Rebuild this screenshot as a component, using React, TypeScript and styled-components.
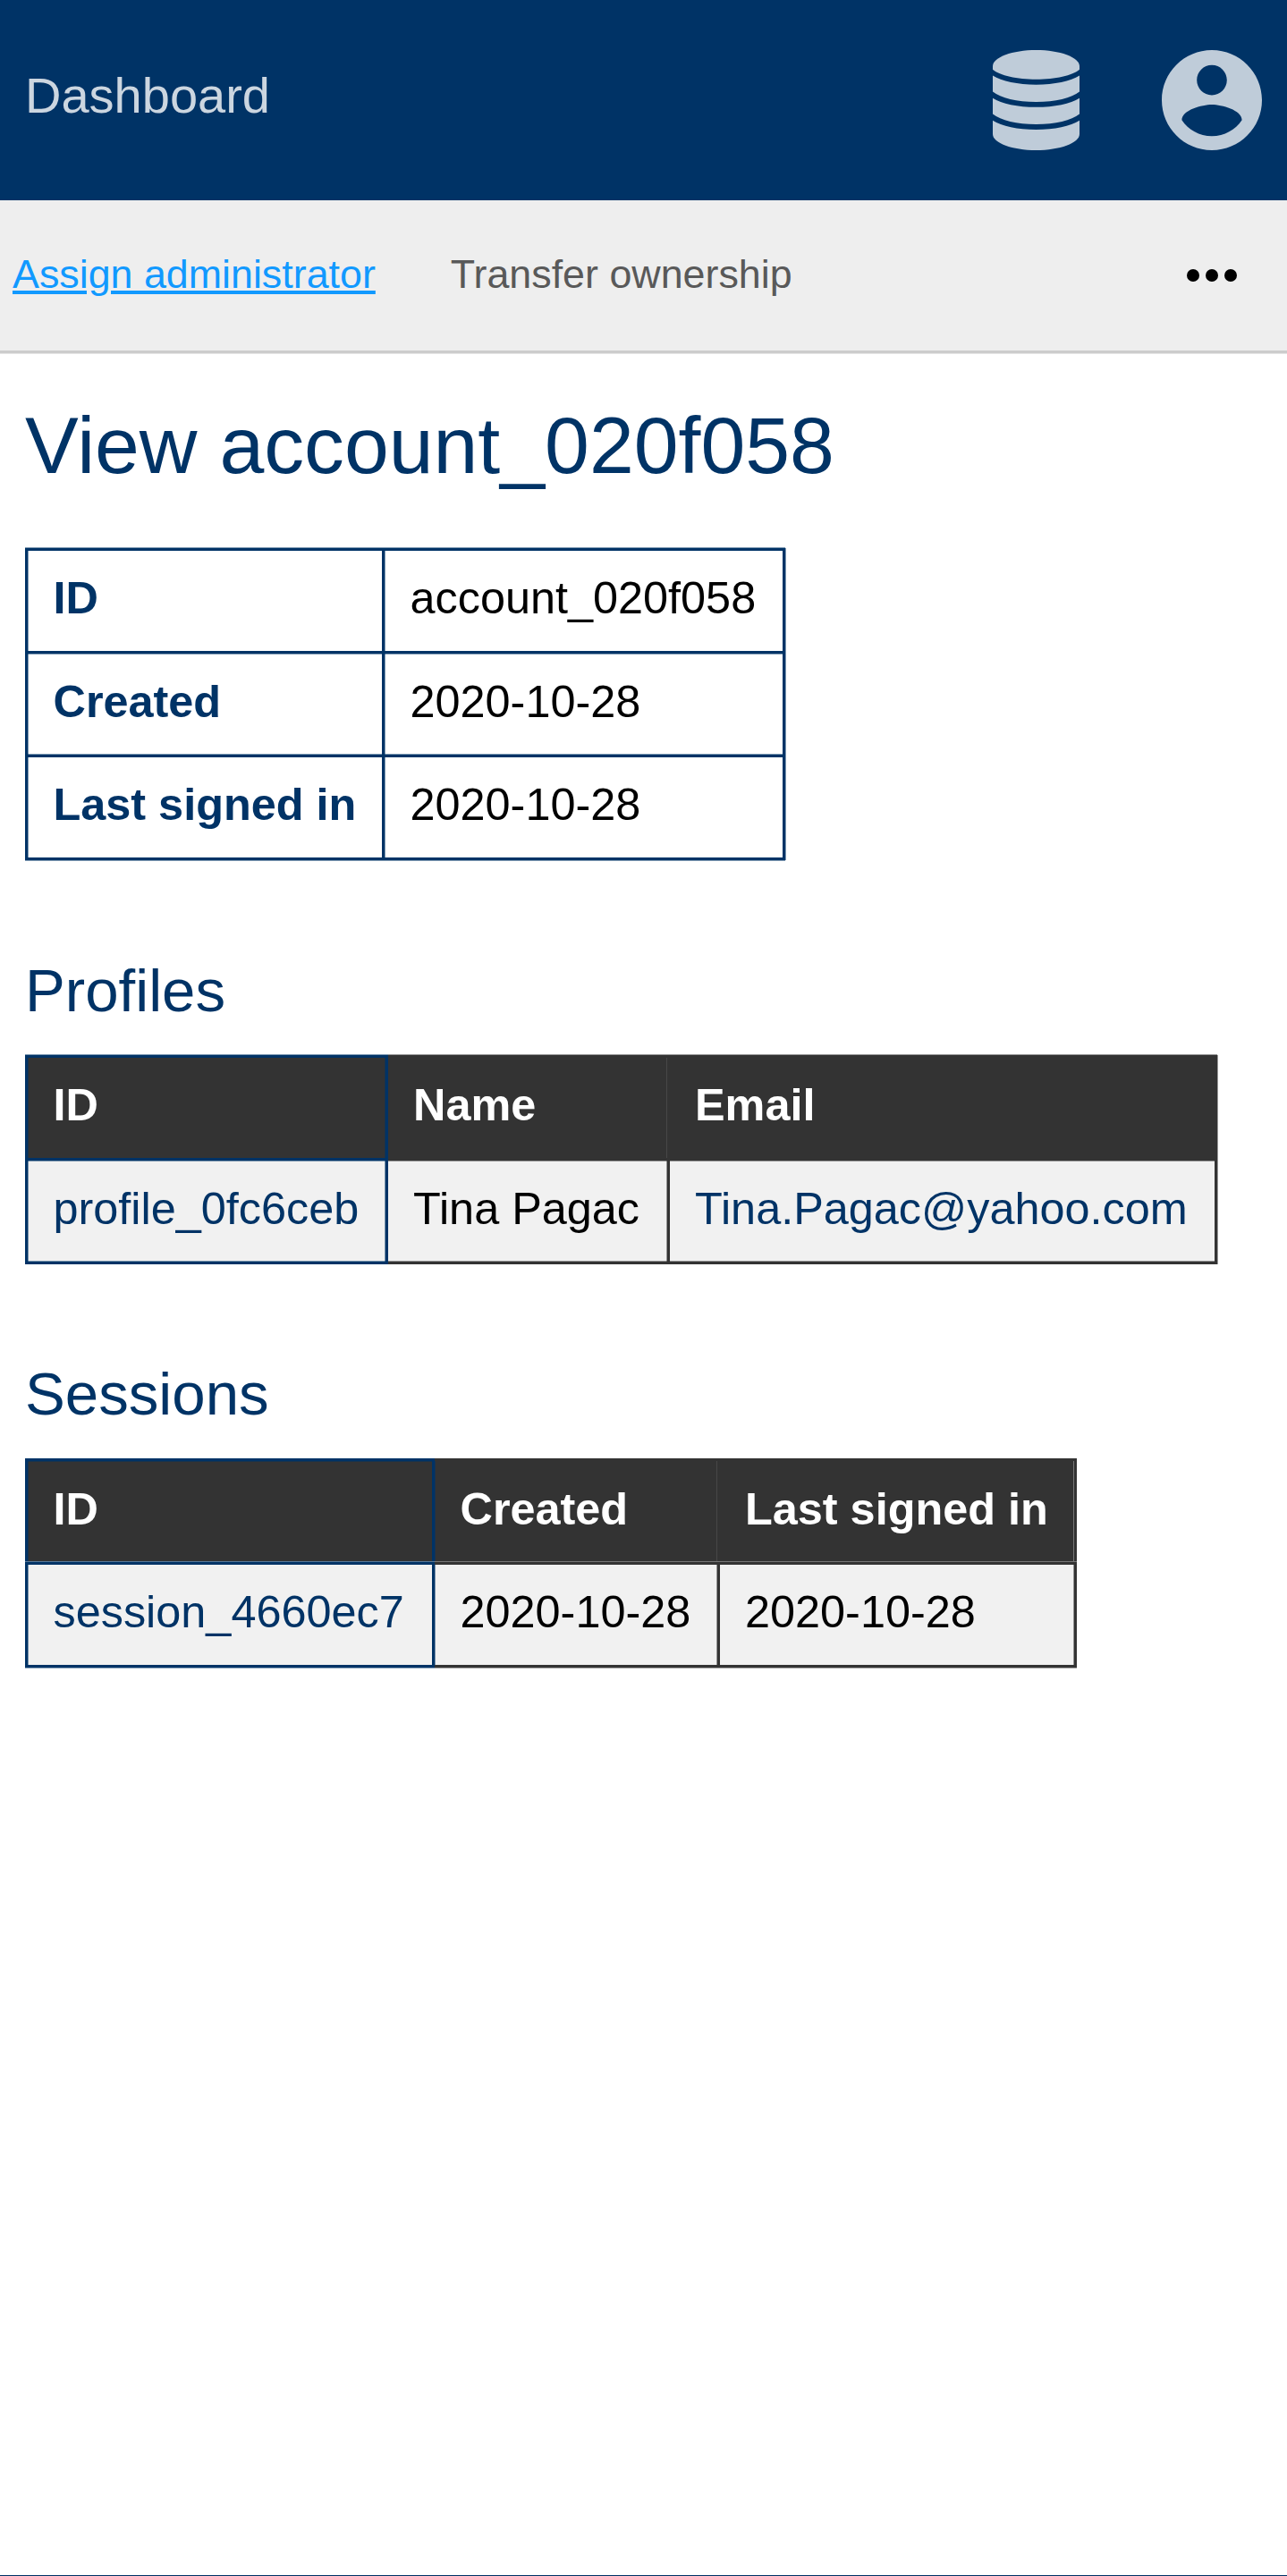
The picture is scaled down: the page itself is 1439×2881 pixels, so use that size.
import React from "react";
import styled, { createGlobalStyle, css } from "styled-components";

const NAVY = "#003366";
const INK = "#333333";

const GlobalStyle = createGlobalStyle`
  * { box-sizing: border-box; }
  body {
    margin: 0;
    background: #ffffff;
    font-family: "Liberation Sans", Arial, sans-serif;
  }
`;

const Page = styled.div`
  display: flex;
  flex-direction: column;
  height: 2881px;
  overflow: hidden;
`;

const Header = styled.header`
  display: flex;
  align-items: center;
  justify-content: space-between;
  height: 224px;
  flex: none;
  padding: 0 28px;
  background: ${NAVY};
`;

const Brand = styled.a`
  font-size: 56px;
  line-height: 63px;
  padding-bottom: 11px;
  color: #ccd6e0;
`;

const HeaderIcons = styled.div`
  display: flex;
  align-items: center;
  gap: 92px;
  color: #bfccd9;

  svg {
    display: block;
    fill: currentColor;
  }
`;

const Menu = styled.nav`
  display: flex;
  align-items: center;
  gap: 84px;
  height: 171px;
  flex: none;
  padding: 0 56px 0 14px;
  background: #eeeeee;
  border-bottom: 3px solid #cccccc;
  box-shadow: 0 1px 0 #e5e5e5;
`;

const MenuLink = styled.a<{ $active?: boolean }>`
  padding-bottom: 3px;
  font-size: 44.8px;
  line-height: 51px;
  color: ${(p) => (p.$active ? "#1199ff" : "#595959")};
  text-decoration: ${(p) => (p.$active ? "underline" : "none")};
`;

const MoreButton = styled.button`
  display: flex;
  gap: 7px;
  margin-left: auto;
  padding: 0;
  border: 0;
  background: none;
`;

const Dot = styled.span`
  width: 14px;
  height: 14px;
  border-radius: 50%;
  background: #000000;
`;

const Main = styled.main`
  flex: 1;
  padding: 51px 28px 0;
`;

const Title = styled.h1`
  margin: 0;
  font-size: 89.6px;
  font-weight: 400;
  line-height: 104px;
  color: ${NAVY};
`;

const SubTitle = styled.h2`
  margin: 0;
  font-size: 67.2px;
  font-weight: 400;
  line-height: 75px;
  color: ${NAVY};
`;

const Section = styled.section<{ $top: number }>`
  display: flex;
  flex-direction: column;
  align-items: flex-start;
  gap: 35px;
  margin-top: ${(p) => p.$top}px;
`;

const Table = styled.table<{ $width: number }>`
  width: ${(p) => p.$width}px;
  table-layout: fixed;
  border-collapse: separate;
  border-spacing: 0;
  font-size: 50.4px;
  line-height: 57px;
`;

const Row = styled.tr<{ $height: number }>`
  height: ${(p) => p.$height}px;
`;

const Col = styled.col<{ $width: number }>`
  width: ${(p) => p.$width}px;
`;

// Half-strength hairlines that sit beside the solid cell borders.
const SIDES = {
  inL: "inset 1px 0 0",
  inR: "inset -1px 0 0",
  inT: "inset 0 1px 0",
  inB: "inset 0 -1px 0",
  outT: "0 -1px 0",
  outR: "1px 0 0",
  outB: "0 1px 0",
};
type Side = keyof typeof SIDES;
type Hairline = Side | [Side, string];

interface CellProps {
  $line: string;
  $soft: Hairline[];
  $first?: boolean;
  $last?: boolean;
  $pad: number;
  $left: number;
}

const hairline = (h: Hairline, line: string) =>
  typeof h === "string" ? `${SIDES[h]} ${line}80` : `${SIDES[h[0]]} ${h[1]}`;

const cell = css<CellProps>`
  padding: ${(p) => p.$pad}px 0 0 ${(p) => p.$left}px;
  vertical-align: top;
  text-align: left;
  white-space: nowrap;
  border: 0 solid ${(p) => p.$line};
  border-top-width: 3px;
  border-right-width: 3px;
  border-left-width: ${(p) => (p.$first ? 3 : 0)}px;
  border-bottom-width: ${(p) => (p.$last ? 3 : 0)}px;
  box-shadow: ${(p) => p.$soft.map((h) => hairline(h, p.$line)).join(", ")};
`;

const KeyCell = styled.th<CellProps>`
  ${cell}
  color: ${NAVY};
`;

const HeadCell = styled.th<CellProps>`
  ${cell}
  color: #ffffff;
  background: ${INK};
`;

const DataCell = styled.td<CellProps & { $link?: boolean; $shaded?: boolean }>`
  ${cell}
  color: ${(p) => (p.$link ? NAVY : "#000000")};
  background: ${(p) => (p.$shaded ? "#f1f1f1" : "transparent")};
`;

const Footer = styled.footer`
  height: 1px;
  flex: none;
  background: ${NAVY};
`;

const DatabaseIcon = () => (
  <svg width="97" height="112" viewBox="0 0 97 112">
    <path d="M48.5 0C75 0 97 8 97 18V21.700C89 28.500 70 32.700 48.500 32.700S8 28.500 0 21.700V18C0 8 22 0 48.500 0Z" />
    <path d="M0 28.600C10 35 28 38.700 48.500 38.700S87 35 97 28.600V46.500C88 53.500 70 58 48.500 58S9 53.500 0 46.500Z" />
    <path d="M0 53.700C10 60 28 63.800 48.500 63.800S87 60 97 53.700V71.600C88 78.600 70 83.100 48.500 83.100S9 78.600 0 71.600Z" />
    <path d="M0 78.700C10 85 28 89 48.500 89S87 85 97 78.700V94C97 104 75 112 48.500 112S0 104 0 94Z" />
  </svg>
);

const AccountIcon = () => (
  <svg width="112" height="112" viewBox="2 2 20 20">
    <path d="M12 2C6.480 2 2 6.480 2 12s4.480 10 10 10 10-4.480 10-10S17.520 2 12 2zm0 3c1.660 0 3 1.340 3 3s-1.340 3-3 3-3-1.340-3-3 1.340-3 3-3zm0 14.200c-2.500 0-4.710-1.280-6-3.220.030-1.990 4-3.080 6-3.080 1.990 0 5.970 1.090 6 3.080-1.290 1.940-3.500 3.220-6 3.220z" />
  </svg>
);

interface Column {
  label: string;
  value: string;
  width: number;
  left: number;
  link?: boolean;
  headSoft: Hairline[];
  bodySoft: Hairline[];
}

interface ListTableProps {
  columns: Column[];
  head: { height: number; pad: number };
  body: { height: number; pad: number };
}

const ListTable = ({ columns, head, body }: ListTableProps) => (
  <Table $width={columns.reduce((sum, c) => sum + c.width, 0)}>
    <colgroup>
      {columns.map((c) => (
        <Col key={c.label} $width={c.width} />
      ))}
    </colgroup>
    <thead>
      <Row $height={head.height}>
        {columns.map((c, i) => (
          <HeadCell
            key={c.label}
            $line={i ? INK : NAVY}
            $first={!i}
            $pad={head.pad}
            $left={c.left}
            $soft={c.headSoft}
          >
            {c.label}
          </HeadCell>
        ))}
      </Row>
    </thead>
    <tbody>
      <Row $height={body.height}>
        {columns.map((c, i) => (
          <DataCell
            key={c.label}
            $shaded
            $last
            $link={c.link}
            $line={i ? INK : NAVY}
            $first={!i}
            $pad={body.pad}
            $left={c.left}
            $soft={c.bodySoft}
          >
            {c.value}
          </DataCell>
        ))}
      </Row>
    </tbody>
  </Table>
);

const details: { label: string; value: string; height: number; pad: number; soft: Hairline[] }[] = [
  { label: "ID", value: "account_020f058", height: 115, pad: 24, soft: ["outT"] },
  { label: "Created", value: "2020-10-28", height: 116, pad: 25, soft: ["inT"] },
  { label: "Last signed in", value: "2020-10-28", height: 118, pad: 24, soft: ["outT", "outB"] },
];

const profileColumns: Column[] = [
  {
    label: "ID",
    value: "profile_0fc6ceb",
    width: 406,
    left: 28.5,
    link: true,
    headSoft: ["outT", "inL", "inR"],
    bodySoft: ["inT", "inB", "inL", "inR"],
  },
  {
    label: "Name",
    value: "Tina Pagac",
    width: 315,
    left: 28,
    headSoft: ["outT", ["inR", "#484848"]],
    bodySoft: ["inT", "inB", "inR"],
  },
  {
    label: "Email",
    value: "Tina.Pagac@yahoo.com",
    width: 612,
    left: 28,
    link: true,
    headSoft: ["outT", "outR"],
    bodySoft: ["inT", "inB", "outR"],
  },
];

const sessionColumns: Column[] = [
  {
    label: "ID",
    value: "session_4660ec7",
    width: 458,
    left: 28.5,
    link: true,
    headSoft: ["inT", "inL"],
    bodySoft: [["outT", "#597998"], "outB", "inL"],
  },
  {
    label: "Created",
    value: "2020-10-28",
    width: 319,
    left: 28.5,
    headSoft: [["inR", "#484848"], ["inL", "#1a3350"]],
    bodySoft: [["outT", "#777777"], "outB", "inR", ["inL", "#7992ac"]],
  },
  {
    label: "Last signed in",
    value: "2020-10-28",
    width: 399,
    left: 28,
    headSoft: [["inR", "#777777"]],
    bodySoft: [["outT", "#777777"], "outB", "inR"],
  },
];

export default function App() {
  return (
    <Page>
      <GlobalStyle />
      <Header>
        <Brand>Dashboard</Brand>
        <HeaderIcons>
          <DatabaseIcon />
          <AccountIcon />
        </HeaderIcons>
      </Header>
      <Menu>
        <MenuLink $active>Assign administrator</MenuLink>
        <MenuLink>Transfer ownership</MenuLink>
        <MoreButton aria-label="More">
          <Dot />
          <Dot />
          <Dot />
        </MoreButton>
      </Menu>
      <Main>
        <Title>View account_020f058</Title>
        <Section $top={63}>
          <Table $width={850}>
            <colgroup>
              <Col $width={402} />
              <Col $width={448} />
            </colgroup>
            <tbody>
              {details.map((d, i) => (
                <Row key={d.label} $height={d.height}>
                  <KeyCell
                    $line={NAVY}
                    $first
                    $last={i === details.length - 1}
                    $pad={d.pad}
                    $left={28.5}
                    $soft={[...d.soft, "inL", "outR"]}
                  >
                    {d.label}
                  </KeyCell>
                  <DataCell
                    $line={NAVY}
                    $last={i === details.length - 1}
                    $pad={d.pad}
                    $left={28.5}
                    $soft={[...d.soft, "outR"]}
                  >
                    {d.value}
                  </DataCell>
                </Row>
              ))}
            </tbody>
          </Table>
        </Section>
        <Section $top={108}>
          <SubTitle>Profiles</SubTitle>
          <ListTable
            columns={profileColumns}
            head={{ height: 115, pad: 24 }}
            body={{ height: 119, pad: 25 }}
          />
        </Section>
        <Section $top={107}>
          <SubTitle>Sessions</SubTitle>
          <ListTable
            columns={sessionColumns}
            head={{ height: 116, pad: 25 }}
            body={{ height: 118, pad: 24 }}
          />
        </Section>
      </Main>
      <Footer />
    </Page>
  );
}
